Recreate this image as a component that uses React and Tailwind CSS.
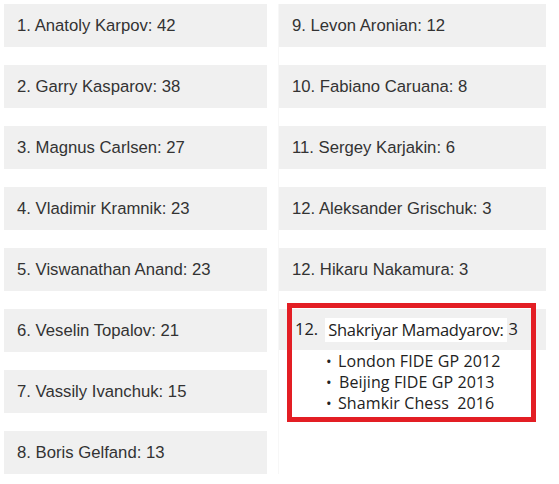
import React from "react";

const left = [
  "1. Anatoly Karpov: 42",
  "2. Garry Kasparov: 38",
  "3. Magnus Carlsen: 27",
  "4. Vladimir Kramnik: 23",
  "5. Viswanathan Anand: 23",
  "6. Veselin Topalov: 21",
  "7. Vassily Ivanchuk: 15",
  "8. Boris Gelfand: 13",
];
const right = [
  "9. Levon Aronian: 12",
  "10. Fabiano Caruana: 8",
  "11. Sergey Karjakin: 6",
  "12. Aleksander Grischuk: 3",
  "12. Hikaru Nakamura: 3",
];

function Box({ text }) {
  return (
    <div className="h-[43px] bg-[#f0f0f0] flex items-center pl-[13px] text-[16.7px] text-[#333] [font-family:'Liberation_Sans',Arial,sans-serif] whitespace-nowrap">
      {text}
    </div>
  );
}

export default function App() {
  return (
    <div className="w-[559px] h-[484px] bg-white relative overflow-hidden">
      <div className="flex pt-[4px] pl-[4px] gap-[12px]">
        <div className="w-[263px] flex flex-col gap-[18px]">
          {left.map((t) => (
            <Box key={t} text={t} />
          ))}
        </div>
        <div className="w-[268px] flex flex-col gap-[18px] border-l border-[#f7f7f7] -ml-px">
          {right.map((t) => (
            <Box key={t} text={t} />
          ))}
          <div className="relative h-[41px] bg-[#f0f0f0]">
            <div className="absolute left-[8px] top-[-6px] w-[249px] h-[119px] border-[5px] border-[#e31e24] bg-white [font-family:'Open_Sans',sans-serif] text-[#222] whitespace-nowrap">
              <div className="h-[41px] mt-px bg-[#f0f0f0] flex items-center pl-[3px]">
                <span className="text-[16.5px] leading-none">12.</span>
                <span className="ml-[7px] bg-white px-[3px] py-[4px] text-[16.5px] leading-[16px] tracking-[-0.3px]">
                  Shakriyar Mamadyarov:
                </span>
                <span className="ml-[2px] text-[16.5px] leading-none">3</span>
              </div>
              <ul className="pl-[34px] pt-[1px] text-[16px] leading-[21px] tracking-[0.1px]">
                <li className="flex"><span className="w-[7px] text-[15px]">•</span><span className="pl-[5px]">London FIDE GP 2012</span></li>
                <li className="flex"><span className="w-[8px] text-[15px]">•</span><span className="pl-[5px]">Beijing FIDE GP 2013</span></li>
                <li className="flex"><span className="w-[7px] text-[15px]">•</span><span className="pl-[5px] whitespace-pre">Shamkir Chess  2016</span></li>
              </ul>
            </div>
          </div>
        </div>
      </div>
    </div>
  );
}
